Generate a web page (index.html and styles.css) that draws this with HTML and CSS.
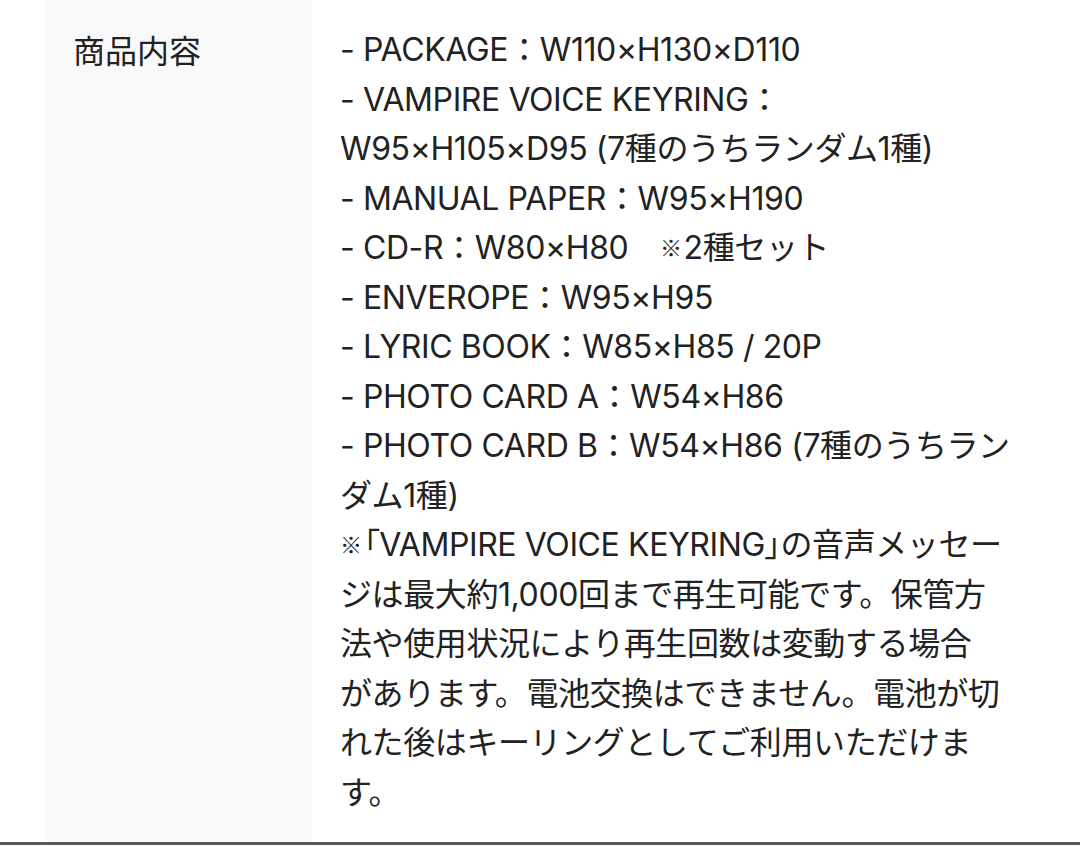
FILE: index.html
```html
<!DOCTYPE html>
<html lang="ja">
<head>
    <meta charset="UTF-8">
    <meta name="viewport" content="width=device-width, initial-scale=1.0">
    <title>商品内容</title>
    <link rel="stylesheet" href="styles.css">
</head>
<body>

    <div class="spec-table">
        <div class="spec-row">
            <div class="spec-label">商品内容</div>
            <div class="spec-value">
                <!-- line breaks follow the original layout -->
                <p>- PACKAGE：W110×H130×D110</p>
                <p>- VAMPIRE VOICE KEYRING：<br>W95×H105×D95 (7種のうちランダム1種)</p>
                <p>- MANUAL PAPER：W95×H190</p>
                <p>- CD-R：W80×H80　<span class="mark">※</span>2種セット</p>
                <p>- ENVEROPE：W95×H95</p>
                <p>- LYRIC BOOK：W85×H85 / 20P</p>
                <p>- PHOTO CARD A：W54×H86</p>
                <p>- PHOTO CARD B：W54×H86 (7種のうちラン<br>ダム1種)</p>
                <p><span class="mark">※</span><span class="pp">「</span>VAMPIRE VOICE KEYRING<span class="pp">」</span>の音声メッセー<br>ジは最大約1,000回まで再生可能です。保管方<br>法や使用状況により再生回数は変動する場合<br>があります。電池交換はできません。電池が切<br>れた後はキーリングとしてご利用いただけま<br>す。</p>
            </div>
        </div>
    </div>

</body>
</html>
```

FILE: styles.css
```css
body {
    margin: 0;
    background-color: #fff;
    color: #222;
    font-family: 'Inter', 'Noto Sans CJK JP', sans-serif;
    font-size: 32px;
    line-height: 49.5px;
}

.spec-table {
    border-bottom: 3px solid #5a5a5a;
}

.spec-row {
    display: flex;
    padding-left: 45px;
}

.spec-label {
    width: 267px;
    flex-shrink: 0;
    box-sizing: border-box;
    padding: 25px 28px 25px;
    background-color: #f9f9fa;
    font-family: 'Noto Sans CJK JP', sans-serif;
}

.spec-value {
    width: 700px;
    padding: 25px 28px 25px;
    letter-spacing: -0.4px;
    white-space: nowrap;
}

.spec-value p {
    margin: 0;
}

/* proportional brackets, like the iOS font */
.pp {
    font-family: 'Noto Sans CJK JP', sans-serif;
    font-feature-settings: "palt";
    line-height: 1;
}

.mark {
    font-family: 'Noto Sans CJK JP', sans-serif;
    font-feature-settings: "palt";
    font-size: 22px;
    line-height: 1;
    vertical-align: 3px;
    margin-right: 2px;
}
```
